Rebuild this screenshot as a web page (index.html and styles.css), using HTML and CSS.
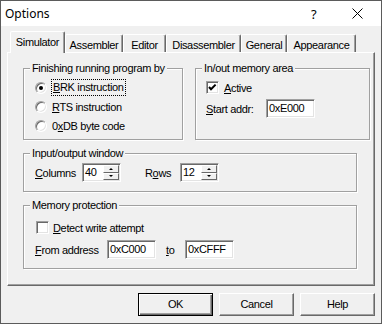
FILE: index.html
```html
<!DOCTYPE html>
<html lang="en">
<head>
  <meta charset="UTF-8">
  <title>Options</title>
  <link rel="stylesheet" href="styles.css">
</head>
<body>
  <div class="window">
    <div class="titlebar">
      <span class="title">Options</span>
      <span class="help">?</span>
      <svg class="close" width="11" height="11" viewBox="0 0 11 11">
        <path d="M0.5 0.5 L10.5 10.5 M10.5 0.5 L0.5 10.5" stroke="#000" stroke-width="1" fill="none"/>
      </svg>
    </div>

    <div class="content">
      <div class="tabs">
        <div class="tab active t-sim">Simulator</div>
        <div class="tab t-asm">Assembler</div>
        <div class="tab t-ed">Editor</div>
        <div class="tab t-dis">Disassembler</div>
        <div class="tab t-gen">General</div>
        <div class="tab t-app">Appearance</div>
      </div>

      <div class="panel">
        <div class="toprow">
          <fieldset class="group g-finish">
            <legend>Finishing running program by</legend>
            <div class="opt">
              <span class="radio checked"></span>
              <span class="focus"><u>B</u>RK instruction</span>
            </div>
            <div class="opt">
              <span class="radio"></span>
              <span class="lbl"><u>R</u>TS instruction</span>
            </div>
            <div class="opt">
              <span class="radio"></span>
              <span class="lbl">0<u>x</u>DB byte code</span>
            </div>
          </fieldset>

          <fieldset class="group g-area">
            <legend>In/out memory area</legend>
            <div class="opt check-row">
              <span class="check">
                <svg width="11" height="11" viewBox="0 0 11 11">
                  <path d="M2 5 L4 7.2 L8.6 2.6" stroke="#000" stroke-width="2" fill="none"/>
                </svg>
              </span>
              <span class="lbl"><u>A</u>ctive</span>
            </div>
            <div class="field-row">
              <span class="flabel w-start"><u>S</u>tart addr:</span>
              <span class="edit">0xE000</span>
            </div>
          </fieldset>
        </div>

        <fieldset class="group g-wide g-window">
          <legend>Input/output window</legend>
          <div class="field-row">
            <span class="flabel w-cols"><u>C</u>olumns</span>
            <span class="spin">
              <span class="spin-text">40</span>
              <span class="spin-btns">
                <span class="sbtn"><i class="up"></i></span>
                <span class="sbtn"><i class="down"></i></span>
              </span>
            </span>
            <span class="flabel w-rows">R<u>o</u>ws</span>
            <span class="spin">
              <span class="spin-text">12</span>
              <span class="spin-btns">
                <span class="sbtn"><i class="up"></i></span>
                <span class="sbtn"><i class="down"></i></span>
              </span>
            </span>
          </div>
        </fieldset>

        <fieldset class="group g-wide g-protect">
          <legend>Memory protection</legend>
          <div class="opt check-row">
            <span class="check"></span>
            <span class="lbl"><u>D</u>etect write attempt</span>
          </div>
          <div class="field-row">
            <span class="flabel w-from"><u>F</u>rom address</span>
            <span class="edit">0xC000</span>
            <span class="flabel w-to"><u>t</u>o</span>
            <span class="edit">0xCFFF</span>
          </div>
        </fieldset>
      </div>

      <div class="buttons">
        <div class="btn default">OK</div>
        <div class="btn">Cancel</div>
        <div class="btn">Help</div>
      </div>
    </div>
  </div>
</body>
</html>
```

FILE: styles.css
```css
* {
  box-sizing: border-box;
}

body {
  margin: 0;
  font-family: "Liberation Sans", Arial, sans-serif;
  font-size: 11px;
  letter-spacing: -0.35px;
  color: #000;
}

.window {
  width: 382px;
  height: 324px;
  border: 1px solid #5b5b5b;
  background: #f0f0f0;
  display: flex;
  flex-direction: column;
}

/* Title bar */
.titlebar {
  height: 25px;
  flex-shrink: 0;
  background: #fff;
  display: flex;
  align-items: center;
  letter-spacing: 0;
}
.title {
  flex: 1;
  padding-left: 4px;
  font-family: "Noto Sans", sans-serif;
  font-size: 12px;
}
.help {
  font-family: "Noto Sans", sans-serif;
  font-size: 13px;
  width: 6px;
  margin-right: 35px;
}
.close {
  margin-right: 18px;
}

.content {
  flex: 1;
  padding: 5px 6px 0 6px;
}

/* Tabs */
.tabs {
  display: flex;
  align-items: flex-end;
  height: 21px;
  padding-left: 3px;
}
.tab {
  height: 18px;
  padding-top: 4px;
  line-height: 13px;
  text-align: center;
  white-space: nowrap;
  border: 1px solid;
  border-bottom: none;
  border-color: #fff #696969 transparent #fff;
  border-radius: 2px 2px 0 0;
  box-shadow: inset -1px 0 #a0a0a0;
}
.tab.active {
  height: 22px;
  margin-bottom: -1px;
  position: relative;
  background: #f0f0f0;
}
.t-sim { width: 55px; }
.t-asm { width: 58px; }
.t-ed { width: 43px; }
.t-dis { width: 75px; }
.t-gen { width: 46px; }
.t-app { width: 69px; }

.panel {
  height: 234px;
  border: 1px solid;
  border-color: #fff #696969 #696969 #fff;
  box-shadow: inset -1px -1px #a0a0a0;
  padding: 8px 0 0 15px;
}

/* Group boxes */
.group {
  margin: 0;
  padding: 2px 0 4px 0;
  border: 1px solid #a0a0a0;
  box-shadow: inset 1px 1px #fff, 1px 1px #fff;
  min-width: 0;
}
.group legend {
  margin-left: 6px;
  padding: 0 2px;
  line-height: 15px;
  background: #f0f0f0;
}

.toprow {
  display: flex;
}
.g-finish {
  width: 160px;
}
.g-area {
  width: 175px;
  margin-left: 12px;
}
.g-wide {
  width: 334px;
  margin-top: 6px;
  padding-bottom: 9px;
}
.g-protect {
  padding-top: 5px;
}

.opt {
  display: flex;
  align-items: center;
  height: 19px;
  padding-left: 11px;
}
.g-area .check-row {
  padding-left: 10px;
}
.g-protect .check-row {
  padding-left: 12px;
}

.radio {
  width: 12px;
  height: 12px;
  border-radius: 50%;
  border: 1px solid;
  border-color: #a0a0a0 #fff #fff #a0a0a0;
  box-shadow: inset 1px 1px #696969, inset -1px -1px #e3e3e3;
  background: #fff;
  display: flex;
  align-items: center;
  justify-content: center;
  margin-right: 5px;
}
.radio.checked::after {
  content: "";
  width: 4px;
  height: 4px;
  border-radius: 50%;
  background: #000;
}

.check {
  width: 13px;
  height: 13px;
  border: 1px solid;
  border-color: #a0a0a0 #fff #fff #a0a0a0;
  box-shadow: inset 1px 1px #696969, inset -1px -1px #e3e3e3;
  background: #fff;
  margin-right: 4px;
  display: flex;
}
.g-area .check {
  margin-right: 5px;
}

.focus {
  padding: 1px 1px 2px;
  outline: 1px dotted #000;
  outline-offset: 0;
}

.field-row {
  display: flex;
  align-items: center;
  height: 19px;
  padding-left: 11px;
}
.g-area .field-row {
  margin-top: 2px;
  padding-left: 10px;
}
.g-protect .field-row {
  margin-top: 3px;
}

.flabel {
  white-space: nowrap;
}
.w-start { width: 60px; }
.w-cols { width: 47px; }
.w-rows { width: 35px; margin-left: 24px; }
.w-from { width: 72px; }
.w-to { width: 19px; margin-left: 10px; }

.edit, .spin {
  height: 19px;
  border: 1px solid;
  border-color: #a0a0a0 #fff #fff #a0a0a0;
  box-shadow: inset 1px 1px #696969, inset -1px -1px #e3e3e3;
  background: #fff;
  line-height: 17px;
}
.edit {
  width: 49px;
  padding-left: 2px;
}
.spin {
  width: 39px;
  display: flex;
  padding: 1px;
}
.spin-text {
  flex: 1;
  padding-left: 1px;
  line-height: 15px;
}
.spin-btns {
  width: 16px;
  display: flex;
  flex-direction: column;
}
.sbtn {
  flex: 1;
  background: #f0f0f0;
  border: 1px solid;
  border-color: #fff #696969 #696969 #fff;
  display: flex;
  align-items: center;
  justify-content: center;
}
.sbtn i {
  width: 0;
  height: 0;
  border-left: 2px solid transparent;
  border-right: 2px solid transparent;
}
.sbtn .up {
  border-bottom: 2px solid #000;
}
.sbtn .down {
  border-top: 2px solid #000;
}

/* Buttons */
.buttons {
  display: flex;
  justify-content: flex-end;
  gap: 6px;
  margin-top: 7px;
}
.btn {
  width: 75px;
  height: 23px;
  line-height: 21px;
  text-align: center;
  background: #f0f0f0;
  border: 1px solid;
  border-color: #fff #696969 #696969 #fff;
  box-shadow: inset -1px -1px #a0a0a0;
}
.btn.default {
  border-color: #000;
  box-shadow: inset 1px 1px #fff, inset -1px -1px #696969, inset -2px -2px #a0a0a0;
}
```
